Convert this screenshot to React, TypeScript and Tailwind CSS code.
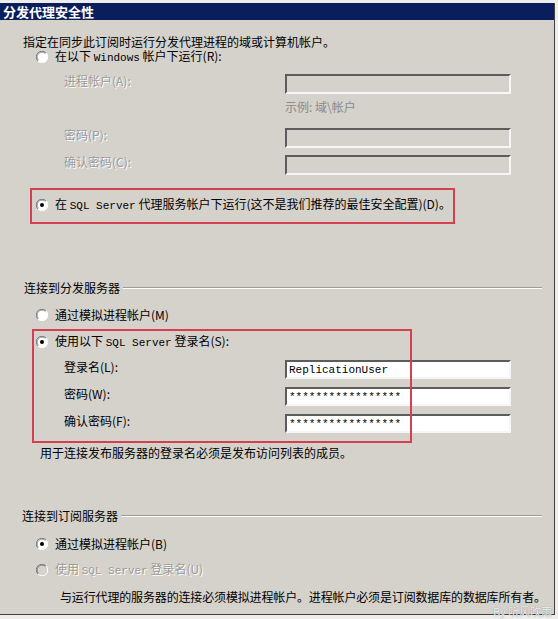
import React from 'react';

const Radio = ({ checked = false, disabled = false }: { checked?: boolean; disabled?: boolean }) => (
  <svg width="12" height="12" viewBox="0 0 12 12" className="shrink-0">
    <circle cx="6" cy="6" r="5.5" fill={disabled ? '#d5d2cc' : '#ffffff'} />
    <path d="M1.9 10.1 A5.5 5.5 0 0 1 10.1 1.9" stroke="#808080" strokeWidth="1" fill="none" />
    <path d="M2.6 9.4 A4.5 4.5 0 0 1 9.4 2.6" stroke="#404040" strokeWidth="1" fill="none" opacity="0.5" />
    <path d="M10.1 1.9 A5.5 5.5 0 0 1 1.9 10.1" stroke="#ffffff" strokeWidth="1" fill="none" />
    {checked && <circle cx="6" cy="6" r="2" fill={disabled ? '#808080' : '#000000'} />}
  </svg>
);

const Mono = ({ children }: { children: React.ReactNode }) => (
  <span className="font-['Liberation_Mono',monospace] text-[11px] leading-[14px]">{children}</span>
);

const RadioRow = ({
  checked,
  disabled,
  className = '',
  children,
}: {
  checked?: boolean;
  disabled?: boolean;
  className?: string;
  children: React.ReactNode;
}) => (
  <div className={`flex items-center h-[14px] ml-[36px] gap-[7px] ${className}`}>
    <Radio checked={checked} disabled={disabled} />
    <span className={`leading-[14px] whitespace-nowrap ${disabled ? 'text-[#9d9a95] [text-shadow:1px_1px_0_#ffffff]' : ''}`}>
      {children}
    </span>
  </div>
);

const Field = ({
  label,
  value,
  disabled = false,
  h = 'h-[20px]',
  className = '',
}: {
  label: string;
  value?: string;
  disabled?: boolean;
  h?: string;
  className?: string;
}) => (
  <div className={`flex items-start ml-[64px] ${className}`}>
    <span className={`w-[221px] ${disabled ? 'text-[#9d9a95] [text-shadow:1px_1px_0_#ffffff]' : ''}`}>{label}</span>
    <div
      className={`w-[226px] ${h} border-2 border-t-[#5c5c5c] border-l-[#5c5c5c] border-b-[#f6f6f6] border-r-[#f6f6f6] flex items-center pl-[2px] ${
        disabled ? 'bg-[#d5d2cc]' : 'bg-white'
      }`}
    >
      {value && <span className="font-['Liberation_Mono',monospace] text-[11px] leading-[14px]">{value}</span>}
    </div>
  </div>
);

const Section = ({ title, className = '' }: { title: string; className?: string }) => (
  <div className={`flex items-center h-[14px] mr-[12px] ${className}`}>
    <span>{title}</span>
    <div className="flex-1 ml-[3px] border-t border-t-[#a09d98] border-b border-b-white" />
  </div>
);

const App = () => {
  const stars = '*****************';
  return (
    <div className="relative w-[558px] h-[619px] bg-[#eeedeb] pt-[3px] font-['Noto_Sans_CJK_SC',sans-serif] text-[12px] leading-[14px] text-black overflow-hidden">
      <div className="w-[555px] h-[612px] bg-[#d5d2cc] border-r border-b border-[#404040] flex flex-col">
        <div className="h-[17px] bg-[#0a1e5e] text-white font-bold text-[13px] leading-[17px] pl-[3px]">分发代理安全性</div>

        <p className="mt-[15px] ml-[23px] h-[14px]">指定在同步此订阅时运行分发代理进程的域或计算机帐户。</p>
        <RadioRow className="mt-[1px]">
          在以下 <Mono>Windows</Mono> 帐户下运行(R):
        </RadioRow>
        <Field className="mt-[10px]" label="进程帐户(A):" disabled />
        <p className="mt-[6px] ml-[285px] h-[14px] text-[#8d8a86]">示例: 域\帐户</p>
        <Field className="mt-[14px]" label="密码(P):" disabled />
        <Field className="mt-[7px]" label="确认密码(C):" disabled />
        <RadioRow className="mt-[23px]" checked>
          在 <Mono>SQL Server</Mono> 代理服务帐户下运行(这不是我们推荐的最佳安全配置)(D)。
        </RadioRow>

        <Section className="mt-[69px] ml-[24px]" title="连接到分发服务器" />
        <RadioRow className="mt-[13px]">通过模拟进程帐户(M)</RadioRow>
        <RadioRow className="mt-[13px]" checked>
          使用以下 <Mono>SQL Server</Mono> 登录名(S):
        </RadioRow>
        <Field className="mt-[11px]" h="h-[19px]" label="登录名(L):" value="ReplicationUser" />
        <Field className="mt-[8px]" h="h-[19px]" label="密码(W):" value={stars} />
        <Field className="mt-[8px]" h="h-[19px]" label="确认密码(F):" value={stars} />
        <p className="mt-[13px] ml-[40px] h-[14px]">用于连接发布服务器的登录名必须是发布访问列表的成员。</p>

        <Section className="mt-[49px] ml-[22px]" title="连接到订阅服务器" />
        <RadioRow className="mt-[14px]" checked>
          通过模拟进程帐户(B)
        </RadioRow>
        <RadioRow className="mt-[12px]" disabled>
          使用 <Mono>SQL Server</Mono> 登录名(U)
        </RadioRow>
        <p className="mt-[13px] ml-[60px] h-[14px] tracking-[-0.15px]">
          与运行代理的服务器的连接必须模拟进程帐户。进程帐户必须是订阅数据库的数据库所有者。
        </p>
      </div>

      {/* red annotation boxes */}
      <div className="absolute left-[30px] top-[188px] w-[425px] h-[36px] border-2 border-[#d4404f]" />
      <div className="absolute left-[32px] top-[329px] w-[380px] h-[114px] border-2 border-[#d4404f]" />

      <span className="absolute left-[493px] top-[605px] text-[11px] leading-[12px] text-[#f4f4f4] [text-shadow:0_0_1px_#6e6e6e]">
        By 听风吹雨
      </span>
    </div>
  );
};

export default App;
